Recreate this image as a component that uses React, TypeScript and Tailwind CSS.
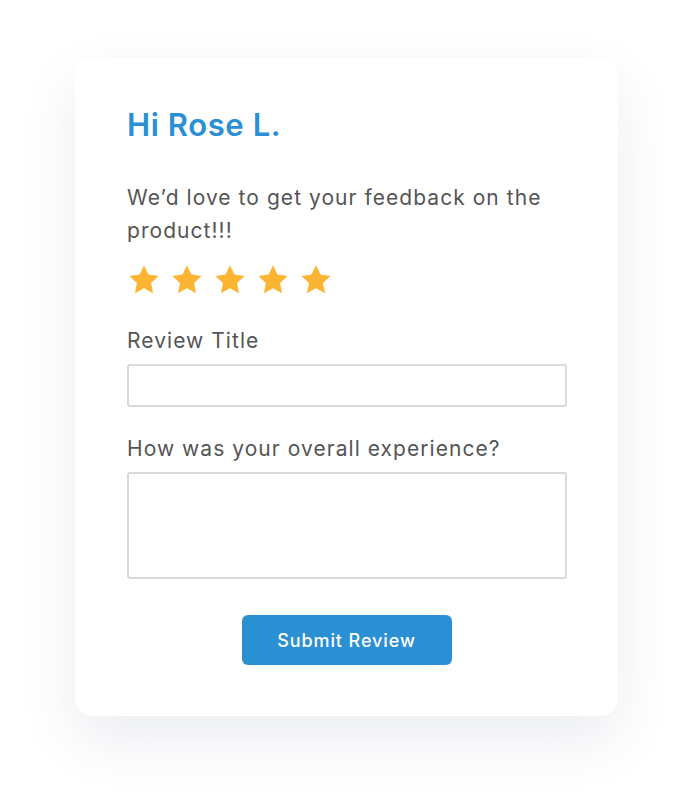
import React from "react";

function Star() {
  return (
    <svg viewBox="0 0 24 24" className="h-[34px] w-[34px]" aria-hidden>
      <path
        d="M12 1.6l3.1 6.6 7.2.9-5.3 5 1.4 7.2L12 17.8l-6.4 3.5L7 14.1l-5.3-5 7.2-.9z"
        fill="#fbb533"
      />
    </svg>
  );
}

export default function App() {
  return (
    <div
      className="min-h-[809px] w-full bg-white px-[75px] pt-[58px]"
      style={{ fontFamily: "Inter, 'Open Sans', sans-serif" }}
    >
      <div className="h-[658px] w-[543px] rounded-[18px] bg-white px-[52px] pt-[47px] shadow-[0_24px_60px_rgba(40,60,100,0.09)]">
        <h1 className="text-[31px] font-semibold leading-[40px] tracking-[0.6px] text-[#2b8fd4]">
          Hi Rose L.
        </h1>

        <p className="mt-[36px] w-[440px] text-[21px] leading-[33px] tracking-[0.05em] text-[#555555]">
          We’d love to get your feedback on the product!!!
        </p>

        <div className="mt-[16px] flex gap-[9px]">
          <Star />
          <Star />
          <Star />
          <Star />
          <Star />
        </div>

        <label className="mt-[29px] block text-[21px] leading-[30px] tracking-[0.05em] text-[#555555]">
          Review Title
        </label>
        <input
          type="text"
          className="mt-[8px] block h-[43px] w-[440px] rounded-[3px] border-2 border-[#d9d9d9] bg-white outline-none"
        />

        <label className="mt-[27px] block text-[21px] leading-[30px] tracking-[0.05em] text-[#555555]">
          How was your overall experience?
        </label>
        <textarea className="mt-[8px] block h-[107px] w-[440px] resize-none rounded-[3px] border-2 border-[#d9d9d9] bg-white outline-none" />

        <div className="mt-[36px] flex justify-center">
          <button
            type="button"
            className="h-[50px] w-[210px] rounded-[6px] bg-[#2b8fd4] text-[18px] font-medium tracking-[0.05em] text-white"
          >
            Submit Review
          </button>
        </div>
      </div>
    </div>
  );
}
